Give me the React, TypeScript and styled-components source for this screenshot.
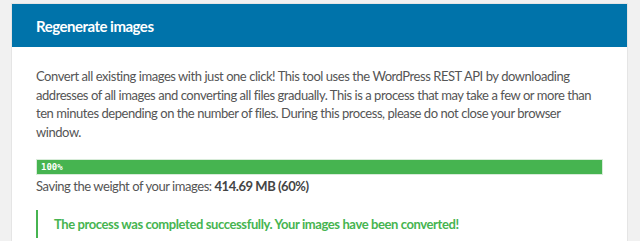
import React from "react";
import styled, { createGlobalStyle } from "styled-components";

const Global = createGlobalStyle`
  html, body { margin: 0; padding: 0; background: #f1f1f1; overflow: hidden; }
  body { font-family: "Lato", sans-serif; }
`;

const Page = styled.div`
  padding: 3px 12px 0 11px;
`;

const Panel = styled.div`
  background: #fff;
  border: 1px solid #e5e5e5;
  border-bottom: none;
  height: 237px;
  overflow: hidden;
`;

const Header = styled.div`
  background: #0073aa;
  height: 43px;
  display: flex;
  align-items: center;
  padding: 0 24px;
`;

const Title = styled.h3`
  margin: 0;
  color: #fff;
  font-size: 15px;
  font-weight: 700;
  letter-spacing: -0.5px;
`;

const Body = styled.div`
  padding: 20px 24px 0;
  color: #555;
  font-size: 13px;
  line-height: 18.5px;
  letter-spacing: -0.45px;
`;

const Text = styled.p`
  margin: 0 0 18px;
`;

const Bar = styled.div`
  height: 16px;
  background: #f1f1f1;
  border: 1px solid #d8ecd9;
  box-sizing: border-box;
`;

const Fill = styled.div`
  height: 100%;
  background: #46b450;
  color: #fff;
  font-family: "DejaVu Sans Mono", monospace;
  font-size: 9px;
  font-weight: bold;
  letter-spacing: 0;
  line-height: 14px;
  padding-left: 4px;
  box-sizing: border-box;
`;

const Stat = styled.p`
  margin: 2px 0 14px;
  strong { font-weight: 700; color: #444; }
`;

const Notice = styled.div`
  border-left: 2px solid #46b450;
  padding: 5px 0 5px 16px;
  color: #46b450;
  font-weight: 700;
  font-size: 13px;
  letter-spacing: -0.4px;
`;

export default function App() {
  const pct = 100;
  return (
    <>
      <Global />
      <Page>
        <Panel>
          <Header>
            <Title>Regenerate images</Title>
          </Header>
          <Body>
            <Text>
              Convert all existing images with just one click! This tool uses the WordPress REST API by downloading
              addresses of all images and converting all files gradually. This is a process that may take a few or more
              than ten minutes depending on the number of files. During this process, please do not close your browser
              window.
            </Text>
            <Bar>
              <Fill style={{ width: `${pct}%` }}>{pct}%</Fill>
            </Bar>
            <Stat>
              Saving the weight of your images: <strong>414.69 MB (60%)</strong>
            </Stat>
            <Notice>The process was completed successfully. Your images have been converted!</Notice>
          </Body>
        </Panel>
      </Page>
    </>
  );
}
